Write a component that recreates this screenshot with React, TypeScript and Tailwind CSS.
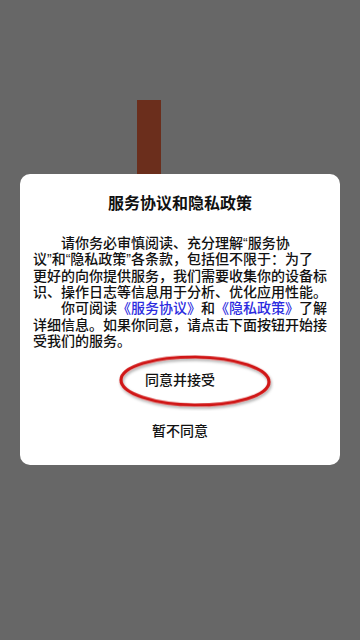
import React from 'react';

const font = { fontFamily: '"Liberation Sans", "Noto Sans CJK SC", sans-serif' };

// hand-drawn red ring around the accept button
const AgreeRing: React.FC = () => (
  <svg className="absolute left-[-27px] top-[-15px] pointer-events-none" width="156" height="56" viewBox="0 0 156 56">
    <defs>
      <filter id="ringShadow" x="-10%" y="-20%" width="120%" height="150%">
        <feDropShadow dx="1" dy="2" stdDeviation="1.5" floodColor="#000" floodOpacity="0.35" />
      </filter>
    </defs>
    <ellipse cx="77" cy="26" rx="74" ry="24" fill="none" stroke="#d01515" strokeWidth="3.2" filter="url(#ringShadow)" transform="rotate(0.8 77 26)" />
  </svg>
);

const App: React.FC = () => {
  const link = 'text-[#2b2be0]';
  return (
    <div className="w-[360px] h-[640px] bg-[#676767] flex flex-col overflow-hidden" style={font}>
      {/* background element behind the dialog */}
      <div className="ml-[137px] mt-[100px] w-[24px] h-[74px] bg-[#6b2e1c]" />

      <div className="mx-[20px] w-[320px] h-[291px] bg-white rounded-[10px] px-[13px] pt-[19px] flex flex-col">
        <div className="text-center text-[16px] leading-[22px] font-bold text-[#111]">服务协议和隐私政策</div>

        <div className="mt-[20px] text-[14px] leading-[16.33px] font-medium text-[#111] whitespace-nowrap">
          <div className="pl-[28px]">请你务必审慎阅读、充分理解“服务协</div>
          <div>议”和“隐私政策”各条款，包括但不限于：为了</div>
          <div>更好的向你提供服务，我们需要收集你的设备标</div>
          <div>识、操作日志等信息用于分析、优化应用性能。</div>
          <div className="pl-[28px]">
            你可阅读<span className={link}>《服务协议》</span>和<span className={link}>《隐私政策》</span>了解
          </div>
          <div>详细信息。如果你同意，请点击下面按钮开始接</div>
          <div>受我们的服务。</div>
        </div>

        <div className="mt-[11px] h-[40px] flex items-center justify-center">
          <button className="relative text-[14px] leading-[20px] font-medium text-[#111]">
            <AgreeRing />
            <span className="relative">同意并接受</span>
          </button>
        </div>

        <div className="mt-[11px] h-[40px] flex items-center justify-center">
          <button className="text-[14px] leading-[20px] font-medium text-[#111]">暂不同意</button>
        </div>
      </div>
    </div>
  );
};

export default App;
